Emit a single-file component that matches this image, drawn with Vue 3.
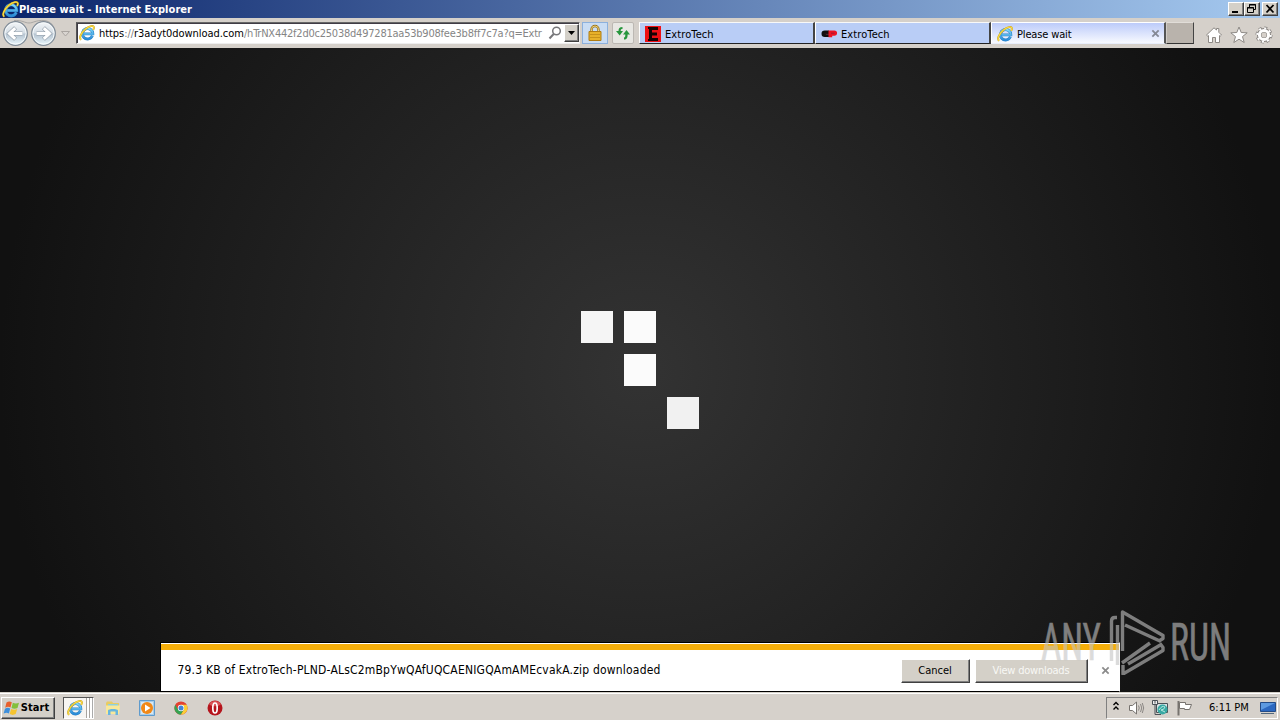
<template>
  <div class="desktop">
    <svg class="symbols" aria-hidden="true">
      <defs>
        <linearGradient id="ieBlue" x1="0" y1="0" x2="0" y2="1">
          <stop offset="0" stop-color="#7fd8fa" />
          <stop offset="1" stop-color="#2a8ad6" />
        </linearGradient>
        <linearGradient id="orb" x1="0" y1="0" x2="0" y2="1">
          <stop offset="0" stop-color="#f4f6f8" />
          <stop offset="0.48" stop-color="#d4dde5" />
          <stop offset="0.52" stop-color="#b5c3d0" />
          <stop offset="1" stop-color="#e9f7fd" />
        </linearGradient>
        <symbol id="ie" viewBox="0 0 16 16">
          <path d="M13.4 10.800A5.200 5.200 0 1 1 13.800 8.900H5" fill="none" stroke="#2b82c4" stroke-width="2.900" />
          <path d="M13.4 10.800A5.200 5.200 0 1 1 13.800 8.900H5" fill="none" stroke="url(#ieBlue)" stroke-width="2" />
          <path d="M2.2 14.7C-.3 13.4 2 7.600 6.600 3.900 10.300.9 14.600.1 14.900 2.300c.1.700-.2 1.600-.7 2.500" fill="none" stroke="#c99a12" stroke-width="1.900" />
          <path d="M2.2 14.7C-.3 13.4 2 7.600 6.600 3.900 10.300.9 14.600.1 14.900 2.300c.1.700-.2 1.600-.7 2.500" fill="none" stroke="#f8dc46" stroke-width="1.200" />
        </symbol>
      </defs>
    </svg>

    <header class="titlebar">
      <svg class="titlebar__icon"><use href="#ie" /></svg>
      <span class="titlebar__text">Please wait - Internet Explorer</span>
      <div class="titlebar__buttons">
        <button class="win" aria-label="Minimize">
          <svg viewBox="0 0 14 12"><path d="M3 8h6v2H3z" /></svg>
        </button>
        <button class="win" aria-label="Restore">
          <svg viewBox="0 0 14 12"><path d="M4.500 4V1.500h6v5H9M4 2h7M2.500 4.500h6v5h-6zM2 5h7" fill="none" stroke="#000" /></svg>
        </button>
        <button class="win win--close" aria-label="Close">
          <svg viewBox="0 0 14 12"><path d="M3.500 2l7 7.500M10.500 2l-7 7.500" fill="none" stroke="#000" stroke-width="1.800" /></svg>
        </button>
      </div>
    </header>

    <nav class="toolbar">
      <svg class="toolbar__travel" viewBox="0 0 76 30">
        <path d="M14 2.500C22 2 25 5 29 5s7-3 15-2.500c7 .500 11 6 11 13" fill="none" stroke="#a9a7a5" />
        <g v-for="x in [15.500, 43.500]" :key="x">
          <circle :cx="x" cy="15.500" r="11.800" fill="url(#orb)" stroke="#7e8a96" stroke-width="1.200" />
          <circle :cx="x" cy="15.500" r="10.600" fill="none" stroke="#f5f9fb" />
        </g>
        <path d="M22.500 15.500H10M15.500 9.800l-6 5.700 6 5.700M36.500 15.500H49M43.500 9.800l6 5.700-6 5.700" fill="none" stroke="#8e9aa6" stroke-width="4.200" />
        <path d="M22.500 15.500H10M15.200 10.100l-5.700 5.400 5.700 5.400M36.500 15.500H49M43.800 10.100l5.700 5.400-5.700 5.400" fill="none" stroke="#fff" stroke-width="3.100" />
        <path d="M61.500 13.500h8l-4 4.500z" fill="#d9d5d1" stroke="#aaa5a1" />
      </svg>
      <div class="address">
        <svg class="address__icon"><use href="#ie" /></svg>
        <span class="address__url"><span class="address__host">https<i>://</i>r3adyt0download.com</span><span class="address__path">/hTrNX442f2d0c25038d497281aa53b908fee3b8ff7c7a?q=Extr</span></span>
        <svg class="address__search" viewBox="0 0 14 14">
          <circle cx="8.500" cy="5" r="3.800" fill="none" stroke="#77777a" stroke-width="1.500" />
          <path d="M5.700 8L1.500 12.500" stroke="#77777a" stroke-width="2" />
        </svg>
        <button class="address__drop" aria-label="Show addresses"><svg viewBox="0 0 13 14"><path d="M3 5h7L6.500 9z" /></svg></button>
      </div>
      <button class="tool tool--lock" aria-label="Security report">
        <svg viewBox="0 0 16 18">
          <path d="M4.500 8V5.500a3.500 3.500 0 0 1 7 0V8" fill="none" stroke="#9a7318" stroke-width="2.400" />
          <path d="M4.500 8V5.500a3.500 3.500 0 0 1 7 0V8" fill="none" stroke="#ecd07a" />
          <path d="M2 7.500h12v9H2z" fill="#e7b12a" stroke="#b07c12" />
          <path d="M3 10.500h10M3 13.500h10" stroke="#c8921a" />
        </svg>
      </button>
      <button class="tool tool--refresh" aria-label="Refresh">
        <svg viewBox="0 0 16 16">
          <path d="M7.500 2C4.500 2 3.500 3.500 3.500 6H1l3.700 4.500L8 6H5.700c0-1.500.3-2 1.800-2z" fill="#27963d" />
          <path d="M9 14.500c3 0 3.600-1.500 3.600-5H15L11.500 5 8 9.500h2.300c0 2-.1 3-1.300 3z" fill="#27963d" />
        </svg>
      </button>
      <div class="tabs">
        <div v-for="tab in tabs" :key="tab.id" class="tab" :class="{ 'tab--active': tab.active }">
          <svg v-if="tab.icon === 'e'" class="tab__icon" viewBox="0 0 16 16">
            <path d="M0 0h16v16H0z" fill="#ee1015" />
            <path d="M3 1h10v3H7v2.500h5v3H7V12h6v3H3v-2h1V3H3z" fill="#160304" />
          </svg>
          <svg v-else-if="tab.icon === 'cp'" class="tab__icon" viewBox="0 0 16 16">
            <path d="M8 4.500H3.800a3.300 3.300 0 0 0 0 6.600H8V8.700H5V7h3z" fill="#111" />
            <path d="M3.500 6.800H8v2H3.500z" fill="#251014" />
            <path d="M7.500 4.500h6a2.500 2.500 0 0 1 0 5.200h-2.300v1.500H7.500z" fill="#ec1424" />
            <path d="M10 7.200h3.500" stroke="#a11830" />
          </svg>
          <svg v-else class="tab__icon"><use href="#ie" /></svg>
          <span class="tab__title">{{ tab.title }}</span>
          <svg v-if="tab.active" class="tab__close" viewBox="0 0 10 10"><path d="M1.500 1.500l7 7M8.500 1.500l-7 7" stroke="#858995" stroke-width="2" /></svg>
        </div>
        <div class="tab-new" />
      </div>
      <div class="commands">
        <svg viewBox="0 0 18 18"><path d="M1.500 9L9 1.800 11.500 4V2.500h2.300v3.800L16.500 9l-1.300 1.200-.7-.6v6.900h-4v-5h-3v5h-4V9.600l-.7.6z" fill="#fff" stroke="#8d8985" /></svg>
        <svg viewBox="0 0 18 18"><path d="M9 1l2.200 5.500 6 .3-4.700 3.800 1.700 5.900L9 13.200l-5.200 3.300 1.700-5.900L.8 6.800l6-.3z" fill="#fff" stroke="#8d8985" /></svg>
        <svg viewBox="0 0 18 18">
          <g fill="none">
            <circle cx="9" cy="9" r="7" stroke="#85817e" stroke-width="3" stroke-dasharray="2.900 2.600" />
            <circle cx="9" cy="9" r="4.800" stroke="#85817e" stroke-width="4.500" />
            <circle cx="9" cy="9" r="6.800" stroke="#fff" stroke-width="2" stroke-dasharray="2.100 3.240" />
            <circle cx="9" cy="9" r="4.600" stroke="#fff" stroke-width="3" />
          </g>
        </svg>
      </div>
    </nav>

    <main class="page">
      <div class="loader">
        <span v-for="(shade, i) in squares" :key="i" class="loader__cell" :class="shade && `loader__cell--${shade}`" />
      </div>
      <section class="notice">
        <span class="notice__text">79.3 KB of ExtroTech-PLND-ALsC2mBpYwQAfUQCAENIGQAmAMEcvakA.zip downloaded</span>
        <button class="btn btn--cancel">Cancel</button>
        <button class="btn btn--view" disabled>View downloads</button>
        <svg class="notice__close" viewBox="0 0 10 10"><path d="M1.500 1.500l7 7M8.500 1.500l-7 7" stroke="#8b8b8b" stroke-width="1.900" /></svg>
      </section>
    </main>

    <footer class="taskbar">
      <button class="start">
        <svg viewBox="0 0 18 16">
          <path d="M3.500 2.500C5.500 1 7 1.200 8.800 2.200L7.500 7.500C5.800 6.600 4.300 6.500 2.200 7.700z" fill="#e8602c" />
          <path d="M9.800 2.700c2 1 4 1 6.200 0l-1.500 5.200c-2 1-4 1-6 0z" fill="#83bf3b" />
          <path d="M2 8.700c2-1.300 3.500-1.200 5.200-.2L5.900 13.500C4.200 12.500 2.700 12.500.6 13.600z" fill="#3d8fdc" />
          <path d="M8.200 9c2 1 4 1 6 .1l-1.500 5c-2 1.100-4 1-6 0z" fill="#f6c42e" />
        </svg>
        <span>Start</span>
      </button>
      <div class="task-ie"><svg><use href="#ie" /></svg></div>
      <div class="quick">
        <svg viewBox="0 0 16 16">
          <path d="M1 3l1-1.500h5L8 3h6v11H1z" fill="#e9cc62" />
          <path d="M3 4h10v4H3z" fill="#8ed0df" />
          <path d="M1 5.500h14L14 14H1z" fill="#f8e89a" />
          <path d="M3 15v-4.500c0-2 10-2 10 0V15h-2.500v-3.500h-5V15z" fill="#67b5de" />
        </svg>
        <svg viewBox="0 0 16 16">
          <path d="M.5.500h15v15H.5z" fill="#a7cce9" stroke="#5f9bcd" />
          <path d="M2 2h12v12H2z" fill="#d5e8f5" />
          <circle cx="8" cy="8" r="6" fill="#f18817" />
          <path d="M6 4.500l5.500 3.500L6 11.500z" fill="#fff" />
        </svg>
        <svg viewBox="0 0 16 16">
          <circle cx="8" cy="8" r="6.600" fill="#e34232" />
          <path d="M2.300 4.700A6.600 6.600 0 0 0 8 14.600l3-5.200-3 1.200-3-1.200z" fill="#35a352" />
          <path d="M8 14.600A6.600 6.600 0 0 0 13.700 4.800H8l3 4.700z" fill="#fbcf35" />
          <circle cx="8" cy="8" r="3.200" fill="#fff" />
          <circle cx="8" cy="8" r="2.500" fill="#4285d6" />
        </svg>
        <svg viewBox="0 0 16 16">
          <circle cx="8" cy="8" r="7.500" fill="#b5151d" />
          <path d="M2 4a7.500 7.500 0 0 1 12 0c-2 3-10 3-12 0z" fill="#d95255" />
          <ellipse cx="8" cy="8" rx="2.200" ry="5" fill="none" stroke="#fff" stroke-width="1.700" />
        </svg>
      </div>
      <div class="tray">
        <svg class="tray__more" viewBox="0 0 8 10"><path d="M1.500 4L4 1.500 6.500 4M1.500 8.500L4 6l2.500 2.500" fill="none" stroke="#000" stroke-width="1.400" /></svg>
        <svg class="tray__volume" viewBox="0 0 17 16">
          <path d="M1.500 5.500h3L8.500 2v12l-4-3.500h-3z" fill="#fff" stroke="#77736f" />
          <path d="M10.500 5.500q1.500 2.500 0 5M12.500 4q2.500 4 0 8M14.300 3q2.800 5 0 10" fill="none" stroke="#8b8784" />
        </svg>
        <svg class="tray__network" viewBox="0 0 16 16">
          <path d="M4.500 3.500h11v9h-11z" fill="#d8e3e5" stroke="#4b5157" />
          <path d="M.5.500h5v4h-5z" fill="#eee" stroke="#4b5157" />
          <path d="M3 .5v3M3 5v9.500h6" fill="none" stroke="#4b5157" />
          <circle cx="10.500" cy="9.500" r="5" fill="#38a9a3" />
          <path d="M7 10q3-5 6-3-1 3-4 3l4 2" fill="none" stroke="#b8e7df" />
        </svg>
        <svg class="tray__flag" viewBox="0 0 17 16">
          <path d="M2.500 1v14.500" stroke="#77736f" stroke-width="2" />
          <path d="M3.500 2.500h6v2h6l-2 5H8.500v-1h-5z" fill="#fff" stroke="#77736f" />
        </svg>
        <span class="tray__clock">6:11 PM</span>
        <svg class="tray__desktop" viewBox="0 0 16 14">
          <path d="M.5 1.500h15v9H.5z" fill="#2c68c0" stroke="#234b87" />
          <path d="M1 2h14L1 9z" fill="#5d9ae1" />
          <path d="M1 12.500h13" stroke="#53687d" />
        </svg>
      </div>
    </footer>

    <svg class="watermark" viewBox="0 0 200 70">
      <text x="1" y="55" textLength="60" lengthAdjust="spacingAndGlyphs">ANY</text>
      <text x="130" y="55" textLength="61" lengthAdjust="spacingAndGlyphs">RUN</text>
      <g fill="none" stroke="#c4c4c4" stroke-width="3.400" stroke-linejoin="round">
        <path d="M77 12.500h-2q-3.500 0-3.500 3.500V56M77.500 20v40" />
        <path d="M119 36l4-2.500v-3L82.500 7v39M85 20l36 16.500" />
        <path d="M88 59l34-20M83 60v9l40-23.500v-3l-3-4M82 58l28-20" />
      </g>
    </svg>
  </div>
</template>

<script setup>
const tabs = [
  { id: 1, title: "ExtroTech", icon: "e", active: false },
  { id: 2, title: "ExtroTech", icon: "cp", active: false },
  { id: 3, title: "Please wait", icon: "ie", active: true },
];

// 3x3 loader grid, empty cells are faded out
const squares = ["mid", "full", "", "", "full", "", "", "", "low"];
</script>

<style>
body {
  margin: 0;
  overflow: hidden;
}
</style>

<style scoped>
.desktop {
  position: relative;
  display: flex;
  flex-direction: column;
  width: 1280px;
  height: 720px;
  overflow: hidden;
  background: #d4d0c8;
  color: #000;
  font-family: "DejaVu Sans Condensed", "DejaVu Sans", sans-serif;
  font-size: 11px;
  font-stretch: condensed;
  white-space: nowrap;
}

.desktop * {
  box-sizing: border-box;
}

svg {
  display: block;
  flex: none;
}

button {
  display: flex;
  flex: none;
  align-items: center;
  justify-content: center;
  padding: 0;
  border: 1px solid;
  border-color: #fff #404040 #404040 #fff;
  border-radius: 0;
  background: #d4d0c8;
  box-shadow: inset -1px -1px #808080;
  color: #000;
  font: inherit;
}

.symbols {
  position: absolute;
  width: 0;
  height: 0;
}

.titlebar {
  display: flex;
  flex: none;
  align-items: center;
  height: 18px;
  padding: 0 2px;
  background: linear-gradient(90deg, #0a246a, #a6caf0);
}

.titlebar__icon {
  width: 17px;
  height: 17px;
}

.titlebar__text {
  color: #fff;
  font-weight: 700;
  letter-spacing: 0.07px;
}

.titlebar__buttons {
  display: flex;
  margin-left: auto;
}

.win {
  width: 16px;
  height: 14px;
}

.win svg {
  width: 14px;
  height: 12px;
}

.win--close {
  margin-left: 2px;
}

.toolbar {
  display: flex;
  flex: none;
  align-items: flex-start;
  height: 30px;
  background: #d5d0ca;
}

.toolbar__travel {
  width: 76px;
  height: 30px;
}

.address {
  display: flex;
  align-items: center;
  width: 504px;
  height: 22px;
  margin-top: 4px;
  padding-left: 2px;
  border: 1px solid;
  border-color: #666 #eee #eee #555;
  background: #fff;
  box-shadow: inset 1px 1px #403c45;
}

.address__icon {
  width: 16px;
  height: 16px;
}

.address__url {
  display: flex;
  width: 448px;
  margin-left: 4px;
}

.address__host {
  width: 145px;
  letter-spacing: -0.06px;
}

.address__host i {
  color: #808080;
  font-style: normal;
}

.address__path {
  color: #858585;
  letter-spacing: -0.23px;
}

.address__search {
  width: 14px;
  height: 14px;
  margin-left: 3px;
}

.address__drop {
  width: 15px;
  height: 18px;
  margin-left: 2px;
}

.address__drop svg {
  width: 13px;
  height: 14px;
}

.tool {
  width: 26px;
  height: 22px;
  margin: 4px 0 0 2px;
  border: 1px solid #8cb0dc;
  background: #c9dcf3;
  box-shadow: none;
}

.tool svg {
  width: 16px;
  height: 18px;
}

.tool--refresh {
  width: 22px;
  margin-left: 4px;
  border-color: #bcb8b3;
  border-radius: 2px;
  background: #e8e7e3;
}

.tabs {
  display: flex;
  margin: 4px 0 0 5px;
}

.tab {
  display: flex;
  align-items: center;
  width: 176px;
  height: 22px;
  padding: 1px 5px 0;
  border: solid;
  border-width: 1px 2px 1px 1px;
  border-color: #f8f8f8 #444 #222 #fff;
  background: #b9cdf6;
}

.tab--active {
  width: 175px;
  padding-right: 4px;
  border-color: #fff #555 #e8eefb #fff;
  background: linear-gradient(#bccbfa, #f8faff);
}

.tab__icon {
  width: 16px;
  height: 16px;
}

.tab__title {
  margin-left: 4px;
  padding-top: 1px;
  letter-spacing: 0.1px;
}

.tab--active .tab__title {
  letter-spacing: -0.15px;
}

.tab__close {
  width: 9px;
  height: 9px;
  margin-left: auto;
}

.tab-new {
  width: 28px;
  height: 22px;
  border: 1px solid;
  border-color: #e1ddd8 #444 #333 #d0ccc7;
  background: #b9b3ac;
}

.commands {
  display: flex;
  gap: 7px;
  margin: 8px 7px 0 auto;
}

.commands svg {
  width: 18px;
  height: 18px;
}

.page {
  display: flex;
  flex: 1;
  flex-direction: column;
  align-items: center;
  background: radial-gradient(circle at 50% 50%, #333 0, #111 640px);
}

.loader {
  display: grid;
  flex: none;
  grid-template-columns: repeat(3, 32px);
  grid-auto-rows: 32px;
  gap: 11px;
  margin-top: 263px;
}

.loader__cell--full {
  background: #fbfbfb;
}

.loader__cell--mid {
  background: #f5f5f5;
}

.loader__cell--low {
  background: #f1f1f1;
}

.notice {
  display: flex;
  align-items: center;
  width: 960px;
  height: 50px;
  margin: auto 1px 0 0;
  padding: 7px 9px 0 17px;
  border: 1px solid #000;
  border-right-color: #fff;
  background: linear-gradient(#fff 1px, #f5ae0a 1px, #f5ae0a 7px, #fff 7px);
}

.notice__text {
  margin-bottom: 2px;
  font-size: 12px;
  letter-spacing: 0.195px;
}

.btn--cancel {
  width: 69px;
  height: 24px;
  margin-left: auto;
}

.btn--view {
  width: 113px;
  height: 24px;
  margin-left: 5px;
  color: #f8f8f5;
  letter-spacing: -0.2px;
}

.notice__close {
  width: 9px;
  height: 9px;
  margin-left: 13px;
}

.taskbar {
  display: flex;
  flex: none;
  align-items: center;
  height: 28px;
  padding: 2px 2px 0 1px;
  border-top: 1px solid #d4d0c8;
  background: #d6d1cb;
  box-shadow: inset 0 1px #fff;
}

.start {
  width: 54px;
  height: 22px;
  padding-right: 4px;
  font-weight: 700;
}

.start svg {
  width: 18px;
  height: 16px;
}

.start span {
  letter-spacing: 0.1px;
}

.task-ie {
  display: flex;
  align-items: center;
  width: 31px;
  height: 22px;
  margin-left: 8px;
  padding-left: 3px;
  border: 1px solid;
  border-color: #555 #fff #fff #555;
  background: linear-gradient(90deg, #f7f5f2 22px, #a8a49f 22px 23px, #fff 23px 25px, #a8a49f 25px 26px, #fff 26px 28px, #aaa 28px);
}

.task-ie svg {
  width: 16px;
  height: 16px;
}

.quick {
  display: flex;
  gap: 18px;
  margin-left: 11px;
}

.quick svg {
  width: 16px;
  height: 16px;
}

.tray {
  display: flex;
  align-items: center;
  width: 172px;
  height: 22px;
  margin-left: auto;
  padding-left: 5px;
  border: 1px solid;
  border-color: #808080 #fff #fff #808080;
}

.tray__more {
  width: 8px;
  height: 10px;
  margin-bottom: 3px;
}

.tray__volume {
  width: 17px;
  height: 16px;
  margin-left: 8px;
}

.tray__network {
  width: 16px;
  height: 16px;
  margin-left: 7px;
}

.tray__flag {
  width: 17px;
  height: 16px;
  margin-left: 8px;
}

.tray__clock {
  width: 41px;
  margin-left: 16px;
}

.tray__desktop {
  width: 16px;
  height: 14px;
  margin-left: 10px;
}

.watermark {
  position: absolute;
  top: 605px;
  left: 1040px;
  width: 200px;
  height: 70px;
  opacity: 0.6;
  pointer-events: none;
}

.watermark text {
  fill: #c4c4c4;
  stroke: #c4c4c4;
  stroke-width: 0.6px;
  font-family: Roboto, sans-serif;
  font-size: 52px;
  font-weight: 400;
}
</style>
